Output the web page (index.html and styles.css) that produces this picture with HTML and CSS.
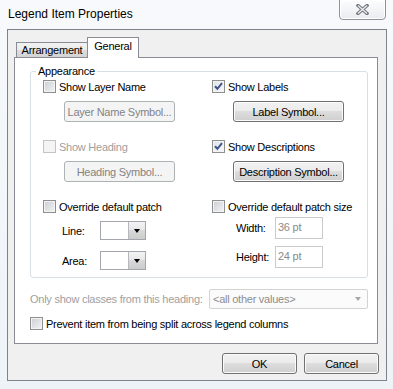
FILE: index.html
```html
<!DOCTYPE html>
<html lang="en">
<head>
    <meta charset="UTF-8">
    <meta name="viewport" content="width=device-width, initial-scale=1.0">
    <title>Legend Item Properties</title>
    <link rel="stylesheet" href="styles.css">
</head>
<body>
<div class="window">
    <!-- Title bar -->
    <div class="titlebar">
        <span class="title">Legend Item Properties</span>
        <div class="close-btn">
            <svg width="13" height="11" viewBox="0 0 13 11">
                <path d="M2 1.5 L11 9.5 M11 1.5 L2 9.5" stroke="#737880" stroke-width="3.4" stroke-linecap="square"/>
                <path d="M2 1.5 L11 9.5 M11 1.5 L2 9.5" stroke="#eceef1" stroke-width="1.3"/>
            </svg>
        </div>
    </div>

    <div class="client">
        <div class="tabs">
            <div class="tab">Arrangement</div>
            <div class="tab active">General</div>
        </div>

        <div class="tab-panel">
            <fieldset class="group">
                <legend>Appearance</legend>
                <div class="group-body">
                    <!-- left column -->
                    <div class="col">
                        <label class="check"><span class="box"></span>Show Layer Name</label>
                        <button class="btn sym-btn" disabled>Layer Name Symbol...</button>
                        <label class="check disabled"><span class="box"></span>Show Heading</label>
                        <button class="btn sym-btn" disabled>Heading Symbol...</button>
                        <label class="check"><span class="box"></span>Override default patch</label>
                        <div class="dd-row">
                            <span class="dd-label">Line:</span>
                            <div class="dropdown"><span class="dd-btn"></span></div>
                        </div>
                        <div class="dd-row">
                            <span class="dd-label">Area:</span>
                            <div class="dropdown"><span class="dd-btn"></span></div>
                        </div>
                    </div>
                    <!-- right column -->
                    <div class="col">
                        <label class="check"><span class="box checked"><svg width="11" height="11" viewBox="0 0 11 11"><path d="M2 5.2 L4.4 7.8 L9 2.2" fill="none" stroke="#3f538c" stroke-width="2"/></svg></span>Show Labels</label>
                        <button class="btn sym-btn">Label Symbol...</button>
                        <label class="check"><span class="box checked"><svg width="11" height="11" viewBox="0 0 11 11"><path d="M2 5.2 L4.4 7.8 L9 2.2" fill="none" stroke="#3f538c" stroke-width="2"/></svg></span>Show Descriptions</label>
                        <button class="btn sym-btn">Description Symbol...</button>
                        <label class="check"><span class="box"></span>Override default patch size</label>
                        <div class="size-row">
                            <span class="size-label">Width:</span>
                            <div class="textbox">36 pt</div>
                        </div>
                        <div class="size-row">
                            <span class="size-label">Height:</span>
                            <div class="textbox">24 pt</div>
                        </div>
                    </div>
                </div>
            </fieldset>

            <div class="heading-row">
                <span class="heading-label">Only show classes from this heading:</span>
                <div class="combo">&lt;all other values&gt;<span class="combo-arrow"></span></div>
            </div>

            <label class="check prevent"><span class="box"></span>Prevent item from being split across legend columns</label>
        </div>

        <div class="actions">
            <button class="btn dialog-btn">OK</button>
            <button class="btn dialog-btn">Cancel</button>
        </div>
    </div>
</div>
</body>
</html>
```

FILE: styles.css
```css
* {
    box-sizing: border-box;
}
body {
    margin: 0;
    font-family: "Liberation Sans", Arial, sans-serif;
    font-size: 11px;
    letter-spacing: -0.25px;
    color: #000;
    background: #f3f6fa;
}
.window {
    width: 393px;
    height: 389px;
    overflow: hidden;
    background: linear-gradient(#f7f9fb, #eef3f8);
}

/* title bar */
.titlebar {
    display: flex;
    justify-content: space-between;
    align-items: flex-start;
    height: 29px;
}
.title {
    padding: 7px 0 0 8px;
    font-size: 12px;
    line-height: 15px;
    letter-spacing: 0;
}
.close-btn {
    width: 47px;
    height: 21px;
    margin: -1px 7px 0 0;
    border: 1px solid #8d939b;
    border-radius: 0 0 4px 4px;
    background: linear-gradient(#fdfdfd, #e9ecf0);
    box-shadow: inset 0 0 0 1px #fff;
    display: flex;
    align-items: center;
    justify-content: center;
}

/* client area */
.client {
    margin-left: 7px;
    width: 380px;
    height: 352px;
    border: 1px solid #7c838c;
    background: #f0f0f0;
    padding: 7px 8px 0 6px;
}
.tabs {
    display: flex;
    align-items: flex-end;
    height: 20px;
    padding-left: 2px;
}
.tab {
    width: 72px;
    height: 15px;
    border: 1px solid #898c95;
    border-bottom: none;
    background: linear-gradient(#f2f2f2, #ebebeb 50%, #dddddd 50%, #d3d3d3);
    text-align: center;
    line-height: 14px;
}
.tab.active {
    width: 52px;
    height: 21px;
    margin-left: -1px;
    margin-bottom: -1px;
    background: #fff;
    line-height: 17px;
    position: relative;
    z-index: 1;
}
.tab-panel {
    height: 287px;
    border: 1px solid #898c95;
    background: #fff;
}

/* group box */
.group {
    margin: 7px 9px 0 15px;
    padding: 0;
    border: 1px solid #d5dfe5;
    border-radius: 3px;
    min-width: 0;
}
.group legend {
    margin-left: 5px;
    padding: 0 2px;
    line-height: 13px;
}
.group-body {
    display: grid;
    grid-template-columns: 169px 1fr;
    padding: 2px 0 7px 12px;
}
.col {
    display: flex;
    flex-direction: column;
    align-items: flex-start;
}

/* checkbox */
.check {
    display: flex;
    align-items: center;
    gap: 3px;
    height: 13px;
    white-space: nowrap;
}
.check .box {
    width: 13px;
    height: 13px;
    flex-shrink: 0;
    border: 1px solid #8e8f8f;
    background: linear-gradient(135deg, #c9cdd3, #f4f4f5);
    box-shadow: inset 0 0 0 1px #f3f3f3;
}
.check .box.checked {
    background: linear-gradient(135deg, #dfe3e8, #f7f8f9);
}
.check .box svg {
    display: block;
}
.check.disabled {
    color: #a0a0a0;
}
.check.disabled .box {
    border-color: #c4c4c4;
    background: #f4f4f4;
    box-shadow: none;
}

/* buttons */
.btn {
    font-family: inherit;
    font-size: 11px;
    letter-spacing: -0.25px;
    color: #000;
    height: 21px;
    padding: 0;
    border: 1px solid #707070;
    border-radius: 3px;
    background: linear-gradient(#f2f2f2, #ebebeb 50%, #dddddd 50%, #cfcfcf);
    box-shadow: inset 0 0 0 1px #fbfbfb;
}
.btn:disabled {
    color: #838383;
    border-color: #adb2b5;
    background: #f4f4f4;
    box-shadow: none;
}
.sym-btn {
    width: 111px;
    margin: 8px 0 18px 21px;
}
.dialog-btn {
    width: 75px;
}

/* patch dropdowns */
.dd-row {
    display: flex;
    align-items: center;
    margin-top: 8px;
}
.dd-row + .dd-row {
    margin-top: 11px;
}
.dd-label {
    width: 38px;
    margin-left: 19px;
}
.dropdown {
    width: 46px;
    height: 19px;
    border: 1px solid #a3a7ad;
    background: #fff;
    display: flex;
    justify-content: flex-end;
}
.dd-btn {
    width: 17px;
    border-left: 1px solid #b5b8bc;
    background: linear-gradient(#f3f3f3, #e6e6e6 50%, #d8d8d8 50%, #cccccc);
    display: flex;
    align-items: center;
    justify-content: center;
}
.dd-btn::after {
    content: "";
    border-top: 4px solid #000;
    border-left: 3.5px solid transparent;
    border-right: 3.5px solid transparent;
}

/* patch size */
.size-row {
    display: flex;
    align-items: center;
    margin-top: 4px;
}
.size-row + .size-row {
    margin-top: 7px;
}
.size-label {
    width: 39px;
    margin-left: 24px;
}
.textbox {
    width: 48px;
    height: 22px;
    border: 1px solid #c8cace;
    background: #fff;
    color: #8a8a8a;
    padding-left: 2px;
    line-height: 19px;
}

/* heading combo */
.heading-row {
    display: flex;
    align-items: center;
    margin: 11px 9px 0 15px;
}
.heading-label {
    flex: 1;
    color: #a0a0a0;
    white-space: nowrap;
}
.combo {
    width: 159px;
    height: 20px;
    border: 1px solid #d3d3d3;
    border-radius: 2px;
    background: #fbfbfb;
    color: #8d8d8d;
    padding-left: 3px;
    line-height: 18px;
    display: flex;
    align-items: center;
    justify-content: space-between;
}
.combo-arrow {
    margin-right: 6px;
    border-top: 4px solid #a8a8a8;
    border-left: 3.5px solid transparent;
    border-right: 3.5px solid transparent;
}
.prevent {
    margin: 8px 0 0 15px;
}

/* OK / Cancel */
.actions {
    display: flex;
    justify-content: flex-end;
    gap: 7px;
    margin: 9px -1px 0 0;
}
```
